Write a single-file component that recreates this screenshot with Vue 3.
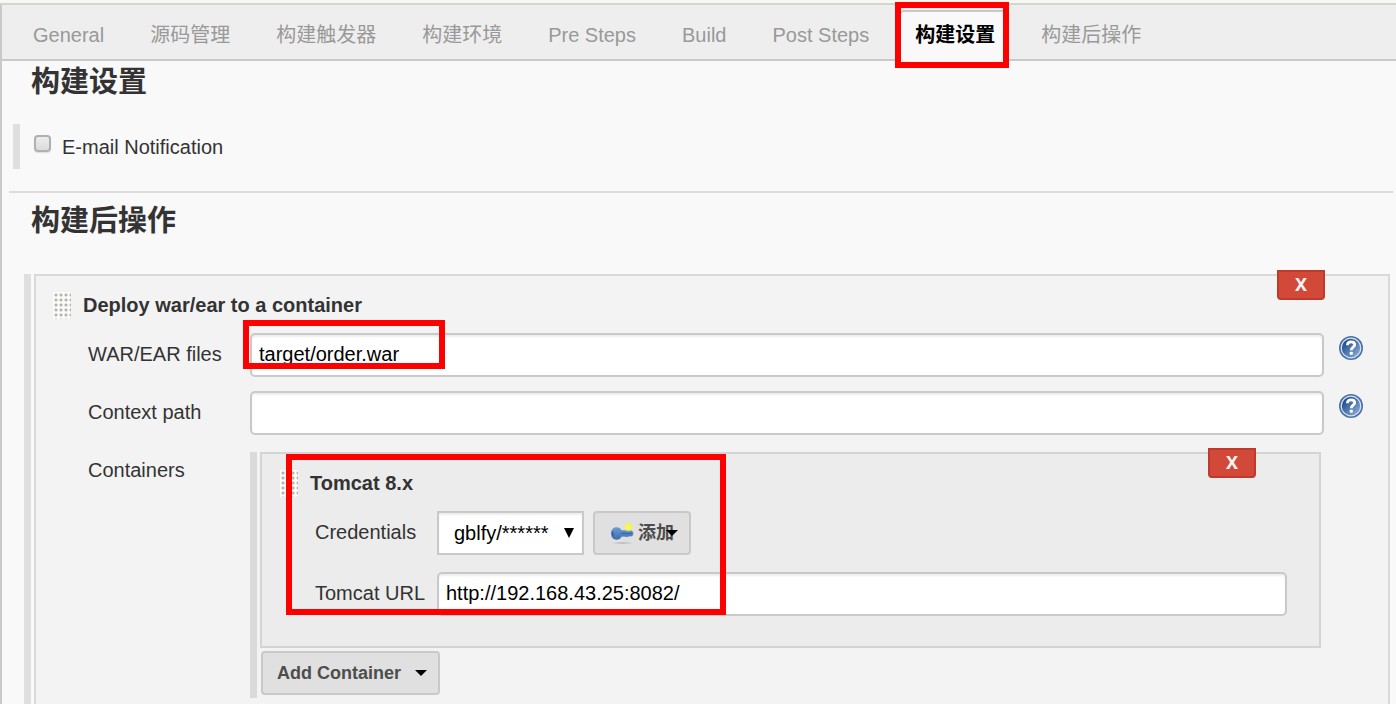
<script setup>
import { ref } from 'vue'

const tabs = ['General', '源码管理', '构建触发器', '构建环境', 'Pre Steps', 'Build', 'Post Steps', '构建设置', '构建后操作']
const active = ref('构建设置')
const notify = ref(false)
const warFiles = ref('target/order.war')
const contextPath = ref('')
const credentials = ref('gblfy')
const tomcatUrl = ref('http://192.168.43.25:8082/')
</script>

<template>
  <div class="page">
    <div class="top-strip"></div>
    <div class="config">
      <nav class="tabs">
        <a
          v-for="tab in tabs"
          :key="tab"
          href="#"
          class="tab"
          :class="{ active: tab === active }"
          @click.prevent="active = tab"
        >{{ tab }}<span v-if="tab === '构建设置'" class="mark mark-tab"></span></a>
      </nav>

      <section class="section">
        <h2 class="heading">构建设置</h2>
        <div class="notify">
          <input id="notify" v-model="notify" type="checkbox" class="check">
          <label for="notify">E-mail Notification</label>
        </div>
      </section>

      <hr class="rule">

      <section class="section post">
        <h2 class="heading">构建后操作</h2>
        <div class="repeat outer-repeat">
          <div class="panel outer">
            <button type="button" class="remove">X</button>
            <div class="panel-head">
              <span class="grip"></span>
              <h3 class="panel-title">Deploy war/ear to a container</h3>
            </div>
            <div class="row">
              <label class="label" for="war">WAR/EAR files</label>
              <div class="field">
                <input id="war" v-model="warFiles" type="text" class="text">
                <span class="mark mark-war"></span>
              </div>
              <button type="button" class="help" aria-label="Help: WAR/EAR files">
                <svg viewBox="0 0 24 24" width="24" height="24">
                  <defs>
                    <linearGradient id="helpFill" x1="0" y1="0" x2="1" y2="1">
                      <stop offset="0.2" stop-color="#24508f" />
                      <stop offset="1" stop-color="#9bb8dc" />
                    </linearGradient>
                  </defs>
                  <circle cx="12" cy="12" r="12" fill="#4a72aa" />
                  <circle cx="12" cy="12" r="9.8" fill="url(#helpFill)" stroke="#dce6f3" stroke-width="1.2" />
                  <path d="M8.400 9.200C8.500 6.900 10 5.900 12 5.900c2.200 0 3.700 1.100 3.700 2.900 0 2.400-3.400 2.500-3.400 5.400" fill="none" stroke="#fff" stroke-width="2.8" />
                  <rect x="10.800" y="15.700" width="3" height="3" rx="0.600" fill="#fff" />
                </svg>
              </button>
            </div>
            <div class="row">
              <label class="label" for="context">Context path</label>
              <div class="field">
                <input id="context" v-model="contextPath" type="text" class="text">
              </div>
              <button type="button" class="help" aria-label="Help: Context path">
                <svg viewBox="0 0 24 24" width="24" height="24">
                  <circle cx="12" cy="12" r="12" fill="#4a72aa" />
                  <circle cx="12" cy="12" r="9.8" fill="url(#helpFill)" stroke="#dce6f3" stroke-width="1.2" />
                  <path d="M8.400 9.200C8.500 6.900 10 5.900 12 5.900c2.200 0 3.700 1.100 3.700 2.900 0 2.400-3.400 2.500-3.400 5.400" fill="none" stroke="#fff" stroke-width="2.8" />
                  <rect x="10.800" y="15.700" width="3" height="3" rx="0.600" fill="#fff" />
                </svg>
              </button>
            </div>
            <div class="row containers">
              <span class="label">Containers</span>
              <div class="repeat inner-repeat">
                <div class="panel inner">
                  <button type="button" class="remove">X</button>
                  <div class="panel-head">
                    <span class="grip"></span>
                    <h3 class="panel-title">Tomcat 8.x</h3>
                  </div>
                  <div class="row">
                    <label class="label" for="credentials">Credentials</label>
                    <div class="select-wrap">
                      <select id="credentials" v-model="credentials" class="select">
                        <option value="gblfy">gblfy/******</option>
                      </select>
                      <svg class="select-arrow" viewBox="0 0 10 10" width="10" height="10"><path d="M0 0h10L5 10z" fill="#000" /></svg>
                    </div>
                    <button type="button" class="button add-key">
                      <svg class="key" viewBox="0 0 24 24" width="24" height="24">
                        <defs>
                          <radialGradient id="spark">
                            <stop offset="0.2" stop-color="#fff94a" />
                            <stop offset="0.7" stop-color="#f8f05a" stop-opacity="0.8" />
                            <stop offset="1" stop-color="#f8f05a" stop-opacity="0" />
                          </radialGradient>
                          <linearGradient id="keyFill" x1="0" y1="0" x2="0" y2="1">
                            <stop offset="0" stop-color="#6d9dd6" />
                            <stop offset="1" stop-color="#3c6db0" />
                          </linearGradient>
                          <radialGradient id="keyShadow">
                            <stop offset="0" stop-color="#b4b4b4" />
                            <stop offset="1" stop-color="#b4b4b4" stop-opacity="0" />
                          </radialGradient>
                        </defs>
                        <ellipse cx="12.500" cy="22" rx="11" ry="1.600" fill="url(#keyShadow)" />
                        <path d="M6.500 6.200c2.700 0 4.200 1.200 5 3h10l1.800 2v2.400l-1.300 1.600-3.500.3-2 .6-2.500-.6-2.500.2c-.9 1.900-2.600 3-5 3-3.300 0-5.500-2.600-5.500-6.200s2.200-6.300 5.500-6.300z" fill="url(#keyFill)" />
                        <path d="M3.200 10.500c-.8 1.400-.7 3.400.3 4.600" fill="none" stroke="#2f5d9d" stroke-width="1.300" />
                        <path d="M11 12.300h11" stroke="#2f5d9d" stroke-width="0.900" />
                        <circle cx="18.500" cy="6" r="5" fill="url(#spark)" />
                      </svg>
                      <span>添加</span>
                      <svg class="add-arrow" viewBox="0 0 12 6" width="12" height="6"><path d="M0 0h12L6 6z" fill="#000" /></svg>
                    </button>
                  </div>
                  <div class="row url-row">
                    <label class="label" for="url">Tomcat URL</label>
                    <div class="field">
                      <input id="url" v-model="tomcatUrl" type="text" class="text">
                    </div>
                  </div>
                  <span class="mark mark-tomcat"></span>
                </div>
                <button type="button" class="button add-container">
                  <span>Add Container</span>
                  <svg viewBox="0 0 12 6" width="12" height="6"><path d="M0 0h12L6 6z" fill="#000" /></svg>
                </button>
              </div>
            </div>
          </div>
        </div>
      </section>
    </div>
  </div>
</template>

<style>
body {
  margin: 0;
  background: #f9f9f9;
}
</style>

<style scoped>
.page,
.page * {
  box-sizing: border-box;
}
.page {
  display: flex;
  flex-direction: column;
  min-height: 100vh;
  overflow-x: hidden;
  font: 20px/24px "Liberation Sans", Arial, "Noto Sans CJK SC", sans-serif;
  color: #333;
}
button,
input,
select {
  margin: 0;
  font: inherit;
}
.top-strip {
  height: 5px;
  background: #f6f9f2;
  border-bottom: 2px solid #d2d5cc;
}
.config {
  flex: 1;
  display: flex;
  flex-direction: column;
  border-left: 2px solid #c9c9c9;
}
.tabs {
  display: flex;
  height: 56px;
  padding-left: 8px;
  background: #eee;
  border-bottom: 2px solid #c9c9c9;
}
.tab {
  position: relative;
  padding: 18px 23px 0;
  color: #999;
  text-decoration: none;
  white-space: nowrap;
}
.tab.active {
  margin: 5px 10px -2px 7px;
  padding: 11px 11px 0 14px;
  border: 2px solid #c9c9c9;
  border-bottom: 0;
  border-radius: 5px 5px 0 0;
  background: #f9f9f9;
  color: #000;
  font-weight: bold;
}
.mark {
  position: absolute;
  border: 6px solid #f00;
  pointer-events: none;
}
.mark-tab {
  left: -6px;
  top: -10px;
  width: 114px;
  height: 66px;
}
.heading {
  margin: 0;
  padding-left: 29px;
  font-size: 29px;
  line-height: 42px;
}
.notify {
  display: flex;
  align-items: center;
  gap: 11px;
  height: 45px;
  margin: 21px 0 22px 11px;
  padding-left: 14px;
  border-left: 7px solid #dfdfdf;
}
.check {
  appearance: none;
  width: 17px;
  height: 17px;
  margin-bottom: 6px;
  border: 2px solid #b0b0b0;
  border-radius: 4px;
  background: linear-gradient(#ececec, #dcdcdc);
  box-shadow: 0 1px 1px #ddd;
}
.check:checked {
  background: #4a72aa;
}
.rule {
  width: auto;
  height: 2px;
  margin: 0 3px 0 7px;
  border: 0;
  background: #dcdcdc;
}
.post {
  flex: 1;
  display: flex;
  flex-direction: column;
  padding-top: 7px;
}
.repeat {
  border-left: 7px solid #dfdfdf;
}
.outer-repeat {
  flex: 1;
  display: flex;
  margin: 32px 6px 0 22px;
  padding-left: 3px;
}
.panel {
  position: relative;
  padding-top: 16px;
  border: 2px solid #d9d9d9;
}
.outer {
  flex: 1;
  min-width: 0;
  padding-left: 17px;
  padding-right: 25px;
  padding-bottom: 6px;
  border-bottom: 0;
  background: #f3f3f3;
}
.inner {
  padding: 16px 32px 30px 18px;
  border-color: #d4d4d4;
  background: #ececec;
}
.remove {
  position: absolute;
  top: -6px;
  right: 63px;
  width: 48px;
  height: 30px;
  padding: 0 0 2px;
  border: 2px solid #bf3a2b;
  border-radius: 0 0 4px 4px;
  background: #d24939;
  color: #f4f4f4;
  font: bold 18px/24px "Noto Sans", "Open Sans", sans-serif;
}
.panel-head {
  display: flex;
  gap: 12px;
  height: 41px;
}
.grip {
  width: 18px;
  height: 27px;
  background-color: #fbfbfa;
  background-image: radial-gradient(circle at 3px 3px, #b5b5b0 1px, transparent 2px);
  background-size: 5px 5px;
}
.panel-title {
  margin: 0;
  font-size: 20px;
  line-height: 26px;
}
.row {
  display: flex;
  align-items: flex-start;
  margin-bottom: 14px;
}
.label {
  flex: none;
  width: 197px;
  padding: 9px 0 0 35px;
}
.inner .label {
  width: 157px;
}
.field {
  position: relative;
  flex: 1;
  min-width: 0;
}
.text {
  display: block;
  width: 100%;
  height: 44px;
  padding: 0 7px 2px;
  border: 2px solid #c9c9c9;
  border-radius: 5px;
  background: #fff;
  box-shadow: inset 0 2px 2px #eee;
  color: #000;
}
.help {
  flex: none;
  width: 24px;
  height: 24px;
  margin-left: 15px;
  margin-top: 3px;
  padding: 0;
  border: 0;
  background: none;
}
.help svg {
  display: block;
}
.mark-war {
  left: -7px;
  top: -13px;
  width: 202px;
  height: 49px;
}
.mark-tomcat {
  left: 24px;
  top: 0;
  width: 440px;
  height: 161px;
}
.containers {
  margin: 17px 42px 0 0;
}
.containers > .label {
  padding-top: 6px;
}
.inner-repeat {
  flex: 1;
  min-width: 0;
  padding: 0 0 3px 3px;
  border-color: #dadada;
}
.select-wrap {
  position: relative;
}
.select {
  appearance: none;
  display: block;
  width: 147px;
  height: 44px;
  padding: 0 30px 0 15px;
  border: 2px solid #c9c9c9;
  border-radius: 0;
  background: #fff;
  box-shadow: inset 0 2px 2px #eee;
  color: #000;
}
.select-arrow {
  position: absolute;
  right: 10px;
  top: 17px;
  pointer-events: none;
}
.button {
  display: flex;
  align-items: center;
  height: 44px;
  border: 2px solid #c9c9c9;
  border-radius: 4px;
  background: #e0e0e0;
  color: #4d4d4d;
  font-size: 18px;
  font-weight: bold;
  white-space: nowrap;
}
.add-key {
  position: relative;
  gap: 4px;
  width: 98px;
  margin-left: 9px;
  padding: 0 0 0 15px;
}
.add-arrow {
  position: absolute;
  right: 11px;
  top: 17px;
}
.url-row {
  margin: 17px 0 0;
}
.add-container {
  gap: 14px;
  margin: 3px 0 0 1px;
  padding: 0 11px 0 14px;
}
</style>
